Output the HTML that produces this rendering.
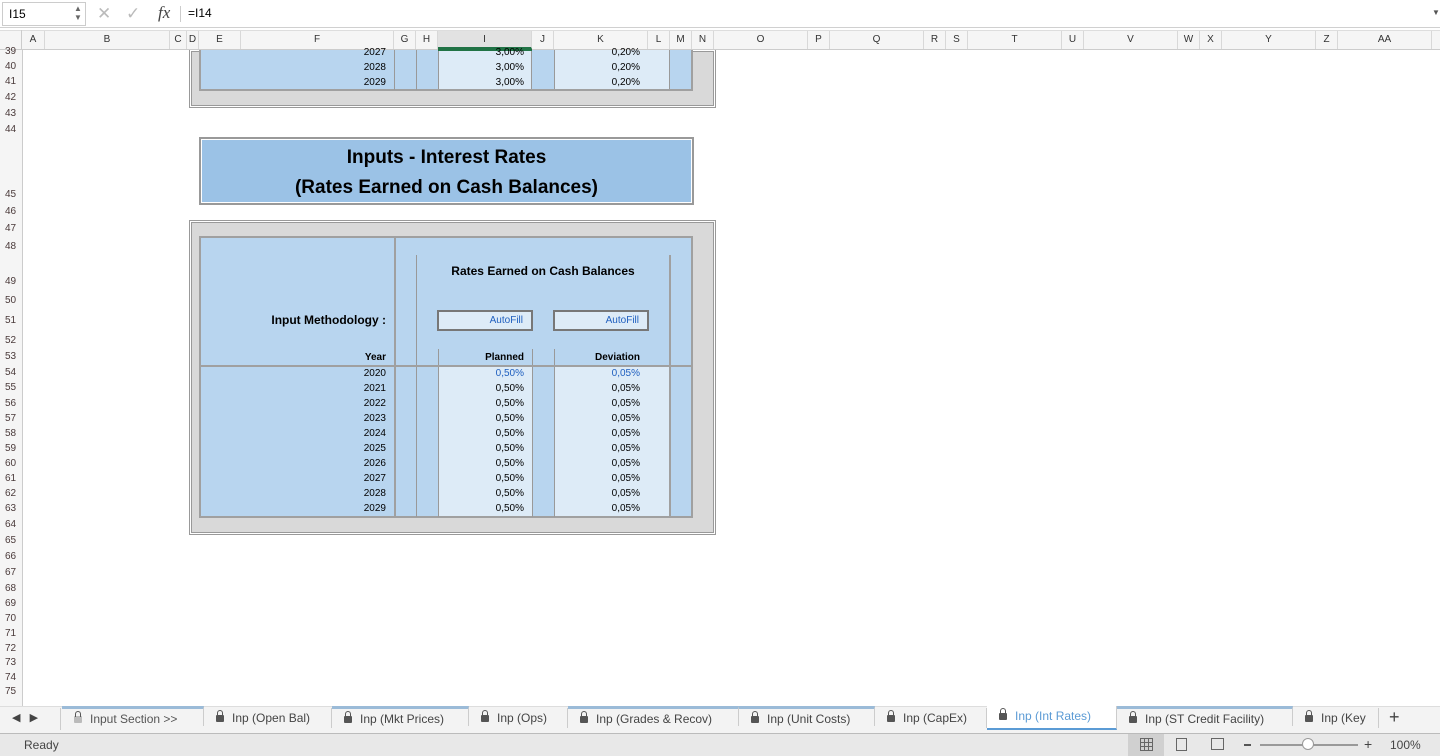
<!DOCTYPE html>
<html><head><meta charset="utf-8"><style>
*{margin:0;padding:0;box-sizing:border-box}
body{width:1440px;height:756px;position:relative;overflow:hidden;background:#fff;font-family:"Liberation Sans",sans-serif;font-size:11px;color:#000}
.a{position:absolute}
.rn{position:absolute;left:0;width:22px;text-align:left;padding-left:5px;font-size:10px;color:#4a3a3a;line-height:12px}
.rl{position:absolute;left:0;width:22px;height:1px;background:#e3e3e3}
.ch{position:absolute;top:31px;height:18px;line-height:18px;text-align:center;font-size:10px;color:#333;border-right:1px solid #d8d8d8}
.c{position:absolute;font-size:10px;text-align:right;line-height:15px}
.tab{position:absolute;top:708px;height:20px;line-height:20px;font-size:12px;color:#444;border-right:1px solid #ccc;padding-left:12px}
.lk{display:inline-block;width:8px;height:7px;background:#555;border-radius:1px;margin-right:8px;position:relative;top:0}
.lk:before{content:"";position:absolute;left:1px;top:-5px;width:4px;height:5px;border:1px solid #555;border-bottom:none;border-radius:3px 3px 0 0}
</style></head><body>
<!-- formula bar -->
<div class="a" style="left:0;top:0;width:1440px;height:28px;background:#fff;border-bottom:1px solid #d0d0d0"></div>
<div class="a" style="left:2px;top:2px;width:84px;height:24px;border:1px solid #ccc;font-size:12px;line-height:22px;padding-left:6px">I15</div>
<div class="a" style="left:74px;top:4px;font-size:8px;color:#666;line-height:9px">▲<br>▼</div>
<div class="a" style="left:97px;top:4px;font-size:17px;color:#bbb">✕</div>
<div class="a" style="left:126px;top:4px;font-size:17px;color:#bbb">✓</div>
<div class="a" style="left:158px;top:3px;font-size:17px;font-style:italic;font-family:'Liberation Serif',serif;color:#444">fx</div>
<div class="a" style="left:180px;top:6px;width:1px;height:16px;background:#ccc"></div>
<div class="a" style="left:188px;top:6px;font-size:12px">=I14</div>
<div class="a" style="left:1432px;top:8px;font-size:8px;color:#555">▼</div>
<!-- column headers -->
<div class="a" style="left:0;top:30px;width:1440px;height:20px;background:#f5f5f5;border-bottom:1px solid #ccc;border-top:1px solid #ddd"></div>
<div class="a" style="left:0;top:30px;width:22px;height:20px;border-right:1px solid #ccc"></div>
<div class="ch" style="left:22px;width:23px">A</div>
<div class="ch" style="left:45px;width:125px">B</div>
<div class="ch" style="left:170px;width:17px">C</div>
<div class="ch" style="left:187px;width:12px">D</div>
<div class="ch" style="left:199px;width:42px">E</div>
<div class="ch" style="left:241px;width:153px">F</div>
<div class="ch" style="left:394px;width:22px">G</div>
<div class="ch" style="left:416px;width:22px">H</div>
<div class="ch" style="left:438px;width:94px;background:#e2e2e2;border-bottom:2px solid #217346">I</div>
<div class="ch" style="left:532px;width:22px">J</div>
<div class="ch" style="left:554px;width:94px">K</div>
<div class="ch" style="left:648px;width:22px">L</div>
<div class="ch" style="left:670px;width:22px">M</div>
<div class="ch" style="left:692px;width:22px">N</div>
<div class="ch" style="left:714px;width:94px">O</div>
<div class="ch" style="left:808px;width:22px">P</div>
<div class="ch" style="left:830px;width:94px">Q</div>
<div class="ch" style="left:924px;width:22px">R</div>
<div class="ch" style="left:946px;width:22px">S</div>
<div class="ch" style="left:968px;width:94px">T</div>
<div class="ch" style="left:1062px;width:22px">U</div>
<div class="ch" style="left:1084px;width:94px">V</div>
<div class="ch" style="left:1178px;width:22px">W</div>
<div class="ch" style="left:1200px;width:22px">X</div>
<div class="ch" style="left:1222px;width:94px">Y</div>
<div class="ch" style="left:1316px;width:22px">Z</div>
<div class="ch" style="left:1338px;width:94px">AA</div>
<!-- row header column -->
<div class="a" style="left:0;top:50px;width:23px;height:656px;background:#f5f5f5;border-right:1px solid #ccc"></div>
<div class="rn" style="top:46px">39</div><div class="rn" style="top:61px">40</div><div class="rn" style="top:76px">41</div><div class="rn" style="top:92px">42</div><div class="rn" style="top:108px">43</div><div class="rn" style="top:124px">44</div><div class="rn" style="top:189px">45</div><div class="rn" style="top:206px">46</div><div class="rn" style="top:223px">47</div><div class="rn" style="top:241px">48</div><div class="rn" style="top:276px">49</div><div class="rn" style="top:295px">50</div><div class="rn" style="top:315px">51</div><div class="rn" style="top:335px">52</div><div class="rn" style="top:351px">53</div><div class="rn" style="top:367px">54</div><div class="rn" style="top:382px">55</div><div class="rn" style="top:398px">56</div><div class="rn" style="top:413px">57</div><div class="rn" style="top:428px">58</div><div class="rn" style="top:443px">59</div><div class="rn" style="top:458px">60</div><div class="rn" style="top:473px">61</div><div class="rn" style="top:488px">62</div><div class="rn" style="top:503px">63</div><div class="rn" style="top:519px">64</div><div class="rn" style="top:535px">65</div><div class="rn" style="top:551px">66</div><div class="rn" style="top:567px">67</div><div class="rn" style="top:583px">68</div><div class="rn" style="top:598px">69</div><div class="rn" style="top:613px">70</div><div class="rn" style="top:628px">71</div><div class="rn" style="top:643px">72</div><div class="rn" style="top:657px">73</div><div class="rn" style="top:672px">74</div><div class="rn" style="top:686px">75</div>

<!-- top table -->
<div class="a" style="left:189px;top:50px;width:527px;height:58px;background:#d9d9d9;border:1px solid #999;border-top:none;box-shadow:inset 0 0 0 1px #fff,inset 0 0 0 2px #999"></div>
<div class="a" style="left:199px;top:50px;width:494px;height:41px;background:#b8d5ef;border:2px solid #a0a0a0;border-top:none"></div>
<div class="a" style="left:394px;top:50px;width:1px;height:40px;background:#999"></div>
<div class="a" style="left:416px;top:50px;width:1px;height:40px;background:#999"></div>
<div class="a" style="left:438px;top:50px;width:94px;height:39px;background:#ddebf7;border-left:1px solid #999;border-right:1px solid #999"></div>
<div class="a" style="left:554px;top:50px;width:116px;height:39px;background:#ddebf7;border-left:1px solid #999;border-right:1px solid #999"></div>
<div class="a" style="left:438px;top:49px;width:94px;height:2px;background:#217346"></div>
<div class="c" style="left:330px;width:56px;top:45px">2027</div>
<div class="c" style="left:330px;width:56px;top:60px">2028</div>
<div class="c" style="left:330px;width:56px;top:75px">2029</div>
<div class="c" style="left:450px;width:74px;top:45px">3,00%</div>
<div class="c" style="left:450px;width:74px;top:60px">3,00%</div>
<div class="c" style="left:450px;width:74px;top:75px">3,00%</div>
<div class="c" style="left:566px;width:74px;top:45px">0,20%</div>
<div class="c" style="left:566px;width:74px;top:60px">0,20%</div>
<div class="c" style="left:566px;width:74px;top:75px">0,20%</div>

<!-- title -->
<div class="a" style="left:199px;top:137px;width:495px;height:68px;background:#9bc2e6;border:2px solid #999;box-shadow:inset 0 0 0 1px #fff;text-align:center;font-weight:bold;font-size:19px;line-height:30px;padding-top:4px">Inputs - Interest Rates<br>(Rates Earned on Cash Balances)</div>

<!-- second table -->
<div class="a" style="left:189px;top:220px;width:527px;height:315px;background:#d9d9d9;border:1px solid #999;box-shadow:inset 0 0 0 1px #fff,inset 0 0 0 2px #999"></div>
<div class="a" style="left:199px;top:236px;width:494px;height:282px;background:#b8d5ef;border:2px solid #a0a0a0"></div>
<div class="a" style="left:438px;top:366px;width:94px;height:150px;background:#ddebf7"></div>
<div class="a" style="left:554px;top:366px;width:116px;height:150px;background:#ddebf7"></div>
<div class="a" style="left:394px;top:237px;width:2px;height:280px;background:#a0a0a0"></div>
<div class="a" style="left:416px;top:255px;width:1px;height:262px;background:#999"></div>
<div class="a" style="left:669px;top:255px;width:2px;height:262px;background:#a0a0a0"></div>
<div class="a" style="left:438px;top:349px;width:1px;height:168px;background:#999"></div>
<div class="a" style="left:532px;top:349px;width:1px;height:168px;background:#999"></div>
<div class="a" style="left:554px;top:349px;width:1px;height:168px;background:#999"></div>
<div class="a" style="left:200px;top:365px;width:492px;height:2px;background:#a0a0a0"></div>
<div class="a" style="left:417px;top:264px;width:252px;text-align:center;font-weight:bold;font-size:12px">Rates Earned on Cash Balances</div>
<div class="a" style="left:200px;top:313px;width:186px;text-align:right;font-weight:bold;font-size:12px">Input Methodology :</div>
<div class="a" style="left:437px;top:310px;width:96px;height:21px;background:#ddebf7;border:2px solid #777;color:#1f5fbf;font-size:10px;text-align:right;padding-right:8px;line-height:17px">AutoFill</div>
<div class="a" style="left:553px;top:310px;width:96px;height:21px;background:#ddebf7;border:2px solid #777;color:#1f5fbf;font-size:10px;text-align:right;padding-right:8px;line-height:17px">AutoFill</div>
<div class="c" style="left:300px;width:86px;top:350px;font-weight:bold">Year</div>
<div class="c" style="left:440px;width:84px;top:350px;font-weight:bold">Planned</div>
<div class="c" style="left:556px;width:84px;top:350px;font-weight:bold">Deviation</div>
<div class="c" style="left:330px;width:56px;top:366px;line-height:15px">2020<br>2021<br>2022<br>2023<br>2024<br>2025<br>2026<br>2027<br>2028<br>2029</div>
<div class="c" style="left:450px;width:74px;top:366px;line-height:15px"><span style="color:#1f5fbf">0,50%</span><br>0,50%<br>0,50%<br>0,50%<br>0,50%<br>0,50%<br>0,50%<br>0,50%<br>0,50%<br>0,50%</div>
<div class="c" style="left:566px;width:74px;top:366px;line-height:15px"><span style="color:#1f5fbf">0,05%</span><br>0,05%<br>0,05%<br>0,05%<br>0,05%<br>0,05%<br>0,05%<br>0,05%<br>0,05%<br>0,05%</div>

<!-- tabs bar -->
<div class="a" style="left:0;top:706px;width:1440px;height:28px;background:#f3f3f3;border-top:1px solid #ddd;border-bottom:1px solid #bbb"></div>
<div class="a" style="left:12px;top:711px;font-size:11px;color:#444">◀&nbsp;&nbsp;&nbsp;▶</div>
<div class="a" style="left:60px;top:708px;width:1px;height:22px;background:#ccc"></div>
<div class="tab" style="left:62px;width:142px;border-top:3px solid #9bbbd8;top:706px;color:#555"><span class="lk" style="background:#bbb"></span>Input Section &gt;&gt;</div>
<div class="tab" style="left:204px;width:128px"><span class="lk"></span>Inp (Open Bal)</div>
<div class="tab" style="left:332px;width:137px;border-top:3px solid #9bbbd8;top:706px"><span class="lk"></span>Inp (Mkt Prices)</div>
<div class="tab" style="left:469px;width:99px"><span class="lk"></span>Inp (Ops)</div>
<div class="tab" style="left:568px;width:171px;border-top:3px solid #9bbbd8;top:706px"><span class="lk"></span>Inp (Grades &amp; Recov)</div>
<div class="tab" style="left:739px;width:136px;border-top:3px solid #9bbbd8;top:706px"><span class="lk"></span>Inp (Unit Costs)</div>
<div class="tab" style="left:875px;width:112px"><span class="lk"></span>Inp (CapEx)</div>
<div class="tab" style="left:987px;width:130px;background:#fff;color:#5b9bd5;border-bottom:2px solid #5b9bd5;height:24px;top:706px"><span class="lk"></span>Inp (Int Rates)</div>
<div class="tab" style="left:1117px;width:176px;border-top:3px solid #9bbbd8;top:706px"><span class="lk"></span>Inp (ST Credit Facility)</div>
<div class="tab" style="left:1293px;width:86px;overflow:hidden;white-space:nowrap"><span class="lk"></span>Inp (Key</div>
<div class="a" style="left:1389px;top:707px;font-size:18px;color:#444">+</div>
<!-- status bar -->
<div class="a" style="left:0;top:734px;width:1440px;height:22px;background:#e8e8e8"></div>
<div class="a" style="left:24px;top:738px;font-size:12px;color:#444">Ready</div>
<div class="a" style="left:1128px;top:734px;width:36px;height:22px;background:#d0d0d0"></div>
<div class="a" style="left:1140px;top:738px;width:13px;height:13px;border:1px solid #666;background:repeating-linear-gradient(90deg,transparent 0 3px,#666 3px 4px),repeating-linear-gradient(0deg,transparent 0 3px,#666 3px 4px)"></div>
<div class="a" style="left:1176px;top:738px;width:11px;height:13px;border:1px solid #666"></div>
<div class="a" style="left:1211px;top:738px;width:13px;height:12px;border:1px solid #666"></div>
<div class="a" style="left:1244px;top:744px;width:7px;height:2px;background:#555"></div>
<div class="a" style="left:1260px;top:744px;width:98px;height:2px;background:#999"></div>
<div class="a" style="left:1302px;top:738px;width:12px;height:12px;border-radius:6px;background:#fff;border:1px solid #999"></div>
<div class="a" style="left:1364px;top:736px;font-size:14px;color:#444">+</div>
<div class="a" style="left:1390px;top:738px;font-size:12px;color:#444">100%</div>
</body></html>
